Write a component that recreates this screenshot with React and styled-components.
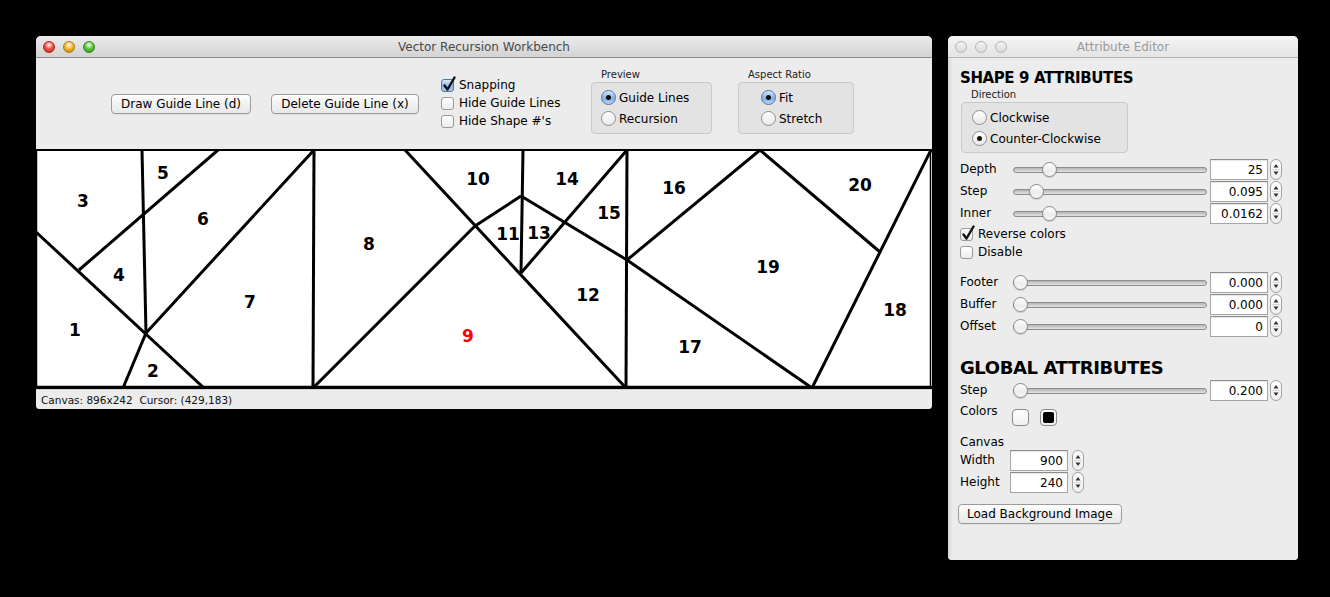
import React from "react";
import styled, { createGlobalStyle, css } from "styled-components";

const GlobalStyle = createGlobalStyle`
  html, body {
    margin: 0;
    padding: 0;
    background: #000;
  }
  body {
    font-family: "DejaVu Sans", "Liberation Sans", sans-serif;
    font-size: 12px;
    color: #000;
  }
`;

const Desktop = styled.div`
  display: flex;
  align-items: flex-start;
  gap: 16px;
  padding: 36px 0 0 36px;
  width: 1330px;
  height: 597px;
  box-sizing: border-box;
  background: #000;
`;

const Window = styled.div`
  width: ${p => p.$w}px;
  height: ${p => p.$h}px;
  background: #ececec;
  border-radius: 5px 5px 4px 4px;
  overflow: hidden;
  display: flex;
  flex-direction: column;
  box-sizing: border-box;
`;

const TitleBar = styled.div`
  height: 22px;
  flex: none;
  position: relative;
  display: flex;
  align-items: center;
  justify-content: center;
  box-sizing: border-box;
  padding-top: 1px;
  border-bottom: 1px solid ${p => (p.$active ? "#8e8e8e" : "#b5b5b5")};
  background: ${p =>
    p.$active
      ? "linear-gradient(#ebebeb, #d3d3d3)"
      : "linear-gradient(#f4f4f4, #e4e4e4)"};
  color: ${p => (p.$active ? "#4a4a4a" : "#9a9a9a")};
  font-size: 12px;
`;

const Lights = styled.div`
  position: absolute;
  left: 7px;
  top: 5px;
  display: flex;
  gap: 8px;
`;

const Light = styled.span`
  width: 12px;
  height: 12px;
  border-radius: 50%;
  box-sizing: border-box;
  ${p =>
    p.$hollow
      ? css`
          border: 1px solid #b4b4b4;
          background: linear-gradient(#f2f2f2, #dcdcdc);
        `
      : css`
          border: 1px solid ${p.$edge};
          background: radial-gradient(circle at 50% 30%, #fff 0, ${p.$c} 45%, ${p.$edge} 100%);
        `}
`;

const Toolbar = styled.div`
  height: 91px;
  flex: none;
  display: flex;
  align-items: flex-start;
  padding-left: 75px;
  box-sizing: border-box;
  background: #ececec;
`;

const PushButton = styled.button`
  flex: none;
  height: 20px;
  width: ${p => (p.$w ? `${p.$w}px` : "auto")};
  margin-top: ${p => p.$top || 0}px;
  margin-left: ${p => p.$left || 0}px;
  padding: 0 8px;
  font-family: inherit;
  font-size: 12px;
  color: #000;
  border: 1px solid #9b9b9b;
  border-radius: 4px;
  background: linear-gradient(#ffffff, #f1f1f1 50%, #e9e9e9);
  box-shadow: 0 1px 0 rgba(0, 0, 0, 0.06);
  white-space: nowrap;
`;

const CheckList = styled.div`
  flex: none;
  width: ${p => p.$w}px;
  margin-top: ${p => p.$top || 0}px;
  margin-left: ${p => p.$left || 0}px;
  display: flex;
  flex-direction: column;
`;

const CheckRow = styled.label`
  height: 18px;
  display: flex;
  align-items: center;
  gap: 5px;
  white-space: nowrap;
`;

const Box = styled.span`
  position: relative;
  width: 13px;
  height: 13px;
  flex: none;
  box-sizing: border-box;
  border-radius: 3px;
  border: 1px solid ${p => (p.$blue ? "#5177a8" : "#9a9a9a")};
  background: ${p =>
    p.$blue
      ? "linear-gradient(#d8e8fb, #89b5ea 55%, #a9cdf6)"
      : "linear-gradient(#ffffff, #ececec)"};
  svg {
    position: absolute;
    left: 0px;
    top: -4px;
  }
`;

const Tick = () => (
  <svg width="15" height="16" viewBox="0 0 15 16">
    <path d="M2.5 9.5 L5.5 13.5 L12.5 1.5" fill="none" stroke="#111" strokeWidth="2.4" strokeLinecap="round" strokeLinejoin="round" />
  </svg>
);

const Check = ({ on, blue, children }) => (
  <CheckRow>
    <Box $blue={blue}>{on && <Tick />}</Box>
    <span>{children}</span>
  </CheckRow>
);

const Group = styled.div`
  flex: none;
  width: ${p => p.$w}px;
  margin-top: ${p => p.$top || 0}px;
  margin-left: ${p => p.$left || 0}px;
  display: flex;
  flex-direction: column;
`;

const GroupLabel = styled.div`
  font-size: 10px;
  line-height: 13px;
  height: 13px;
  padding-left: ${p => p.$indent || 10}px;
  color: #222;
  margin-bottom: 1px;
`;

const GroupBox = styled.div`
  box-sizing: border-box;
  height: ${p => p.$h}px;
  padding: 4px 0 0 ${p => p.$pad}px;
  border: 1px solid #c9c9c9;
  border-radius: 4px;
  background: #e3e3e3;
`;

const RadioRow = styled.label`
  height: 21px;
  display: flex;
  align-items: center;
  gap: 3px;
  white-space: nowrap;
`;

const RadioDot = styled.span`
  width: 15px;
  height: 15px;
  flex: none;
  box-sizing: border-box;
  border-radius: 50%;
  display: flex;
  align-items: center;
  justify-content: center;
  border: 1px solid ${p => (p.$on && p.$blue ? "#4f74a6" : "#8f8f8f")};
  background: ${p =>
    p.$on && p.$blue
      ? "linear-gradient(#d6e7fb, #7fb0ea 55%, #b6d5f8)"
      : "linear-gradient(#ffffff, #e8e8e8)"};
  &::after {
    content: "";
    display: ${p => (p.$on ? "block" : "none")};
    width: 5px;
    height: 5px;
    border-radius: 50%;
    background: #111;
  }
`;

const Radio = ({ on, blue, children }) => (
  <RadioRow>
    <RadioDot $on={on} $blue={blue} />
    <span>{children}</span>
  </RadioRow>
);

const CanvasFrame = styled.div`
  height: 240px;
  flex: none;
  background: #fff;
  svg {
    display: block;
  }
`;

const StatusBar = styled.div`
  height: 20px;
  flex: none;
  display: flex;
  align-items: center;
  padding-left: 5px;
  font-size: 10.5px;
  color: #111;
  background: #ececec;
  border-top: 1px solid #d0d0d0;
  box-sizing: border-box;
  white-space: pre;
`;

const P = {
  A: [106, 1], B: [110, 184], C: [0, 83], D: [168, 239], E: [87, 239],
  F: [182, 1], G: [43, 121], H: [278, 1], I: [277, 239], J: [369, 1],
  K: [439, 77], L: [485, 47], M: [487, 1], N: [485, 124], O: [590, 239],
  Pp: [591, 1], Q: [591, 111], S: [724, 1], T: [844, 103], U: [895, 1],
  V: [776, 239],
};

const segments = [
  ["A", "B"], ["C", "D"], ["B", "E"], ["F", "G"], ["B", "H"], ["H", "I"],
  ["I", "K"], ["K", "L"], ["J", "O"], ["M", "N"], ["L", "Q"], ["N", "Pp"],
  ["Pp", "O"], ["Q", "S"], ["S", "T"], ["U", "V"], ["Q", "V"],
];

const labels = [
  [1, 39, 181], [2, 117, 222], [3, 47, 52], [4, 83, 126], [5, 127, 24],
  [6, 167, 70], [7, 214, 153], [8, 333, 95], [9, 432, 187], [10, 442, 30],
  [11, 472, 85], [12, 552, 146], [13, 503, 84], [14, 531, 30], [15, 573, 64],
  [16, 638, 39], [17, 654, 198], [18, 859, 161], [19, 732, 118], [20, 824, 36],
];

const Drawing = () => (
  <svg width="896" height="240" viewBox="0 0 896 240">
    <rect x="0" y="0" width="896" height="240" fill="#fff" />
    {segments.map(([a, b]) => (
      <line key={a + b} x1={P[a][0]} y1={P[a][1]} x2={P[b][0]} y2={P[b][1]} stroke="#000" strokeWidth="3" />
    ))}
    <rect x="0.5" y="0.5" width="894" height="237" fill="none" stroke="#000" strokeWidth="1.5" />
    <line x1="0" y1="1" x2="896" y2="1" stroke="#000" strokeWidth="2" />
    <line x1="0" y1="238.5" x2="896" y2="238.5" stroke="#000" strokeWidth="3" />
    {labels.map(([n, x, y]) => (
      <text
        key={n}
        x={x}
        y={y + 6}
        textAnchor="middle"
        fontFamily="DejaVu Sans, sans-serif"
        fontWeight="bold"
        fontSize="17"
        fill={n === 9 ? "#ff0000" : "#000"}
      >
        {n}
      </text>
    ))}
  </svg>
);

/* attribute editor */

const Panel = styled.div`
  flex: 1;
  padding: 10px 12px 0 12px;
  display: flex;
  flex-direction: column;
  background: linear-gradient(90deg, #d9d9d9 0, #ececec 5px);
`;

const Heading = styled.div`
  font-weight: bold;
  font-size: ${p => p.$size}px;
  line-height: ${p => p.$lh}px;
  margin-top: ${p => p.$top || 0}px;
  letter-spacing: -0.4px;
  white-space: nowrap;
`;

const SmallLabel = styled.div`
  font-size: 10px;
  line-height: 13px;
  margin-top: 1px;
  padding-left: 11px;
  color: #222;
`;

const FieldRow = styled.div`
  height: 22px;
  flex: none;
  display: grid;
  grid-template-columns: ${p => p.$label}px ${p => (p.$track ? "194px 3px" : "")} 58px 12px;
  column-gap: ${p => (p.$track ? 0 : 2)}px;
  align-items: start;
  margin-top: ${p => p.$top || 0}px;
`;

const RowLabel = styled.span`
  line-height: 20px;
  white-space: nowrap;
`;

const Track = styled.div`
  position: relative;
  height: 21px;
  &::before {
    content: "";
    position: absolute;
    left: 0;
    right: 0;
    top: 8px;
    height: 4px;
    border-radius: 3px;
    border: 1px solid #8c8c8c;
    background: linear-gradient(#b5b5b5, #e3e3e3);
  }
`;

const Knob = styled.span`
  position: absolute;
  top: 3px;
  width: 15px;
  height: 15px;
  box-sizing: border-box;
  border-radius: 50%;
  border: 1px solid #8a8a8a;
  background: linear-gradient(#ffffff, #ececec 60%, #f8f8f8);
  box-shadow: 0 1px 1px rgba(0, 0, 0, 0.15);
`;

const NumField = styled.div`
  height: 21px;
  box-sizing: border-box;
  border: 1px solid #a6a6a6;
  border-top-color: #8d8d8d;
  background: #fff;
  text-align: right;
  padding-right: 4px;
  line-height: 20px;
  font-size: 12px;
  box-shadow: inset 0 1px 1px rgba(0, 0, 0, 0.1);
`;

const StepperBox = styled.div`
  margin-left: 2px;
  width: 12px;
  height: 21px;
  box-sizing: border-box;
  border: 1px solid #a3a3a3;
  border-radius: 6px;
  background: linear-gradient(#ffffff, #eeeeee);
  svg {
    display: block;
  }
`;

const Stepper = () => (
  <StepperBox>
    <svg width="10" height="19" viewBox="0 0 10 19">
      <path d="M5 4 L7.5 7.5 L2.5 7.5 Z" fill="#333" />
      <path d="M5 15 L7.5 11.5 L2.5 11.5 Z" fill="#333" />
      <line x1="1" y1="9.5" x2="9" y2="9.5" stroke="#d8d8d8" strokeWidth="1" />
    </svg>
  </StepperBox>
);

const SliderRow = ({ label, value, pos, top }) => (
  <FieldRow $label={53} $track $top={top}>
    <RowLabel>{label}</RowLabel>
    <Track>
      <Knob style={{ left: `${pos * 179}px` }} />
    </Track>
    <span />
    <NumField>{value}</NumField>
    <Stepper />
  </FieldRow>
);

const SizeRow = ({ label, value }) => (
  <FieldRow $label={48}>
    <RowLabel>{label}</RowLabel>
    <NumField>{value}</NumField>
    <Stepper />
  </FieldRow>
);

const CheckStack = styled.div`
  display: flex;
  flex-direction: column;
  margin-top: ${p => p.$top || 0}px;
`;

const DirectionWrap = styled.div`
  width: 167px;
  margin: 1px 0 0 1px;
`;

const ColorsRow = styled.div`
  height: 25px;
  display: flex;
  align-items: flex-start;
  span:first-child {
    width: 52px;
    line-height: 18px;
  }
`;

const Swatch = styled.span`
  width: 17px;
  height: 17px;
  margin-top: 7px;
  margin-right: 11px;
  box-sizing: border-box;
  border: 1px solid #8a8a8a;
  border-radius: 4px;
  background: linear-gradient(#ffffff, #efefef);
  display: flex;
  align-items: center;
  justify-content: center;
  &::after {
    content: "";
    display: ${p => (p.$fill ? "block" : "none")};
    width: 11px;
    height: 11px;
    border-radius: 2px;
    background: ${p => p.$fill};
  }
`;

const PlainLabel = styled.div`
  line-height: 16px;
  margin-top: ${p => p.$top || 0}px;
`;

const ButtonLine = styled.div`
  margin-left: -2px;
`;

export default function App() {
  return (
    <>
      <GlobalStyle />
      <Desktop>
        <Window $w={896} $h={373}>
          <TitleBar $active>
            <Lights>
              <Light $c="#f4524c" $edge="#b02420" />
              <Light $c="#f6b62a" $edge="#b07a12" />
              <Light $c="#5fc63d" $edge="#2e8a1d" />
            </Lights>
            Vector Recursion Workbench
          </TitleBar>
          <Toolbar>
            <PushButton $w={140} $top={36}>Draw Guide Line (d)</PushButton>
            <PushButton $w={148} $top={36} $left={20}>Delete Guide Line (x)</PushButton>
            <CheckList $w={150} $top={18} $left={22}>
              <Check on blue>Snapping</Check>
              <Check>Hide Guide Lines</Check>
              <Check>Hide Shape #'s</Check>
            </CheckList>
            <Group $w={121} $top={10}>
              <GroupLabel>Preview</GroupLabel>
              <GroupBox $h={52} $pad={9}>
                <Radio on blue>Guide Lines</Radio>
                <Radio>Recursion</Radio>
              </GroupBox>
            </Group>
            <Group $w={116} $top={10} $left={26}>
              <GroupLabel>Aspect Ratio</GroupLabel>
              <GroupBox $h={52} $pad={22}>
                <Radio on blue>Fit</Radio>
                <Radio>Stretch</Radio>
              </GroupBox>
            </Group>
          </Toolbar>
          <CanvasFrame>
            <Drawing />
          </CanvasFrame>
          <StatusBar>Canvas: 896x242  Cursor: (429,183)</StatusBar>
        </Window>

        <Window $w={350} $h={524}>
          <TitleBar>
            <Lights>
              <Light $hollow />
              <Light $hollow />
              <Light $hollow />
            </Lights>
            Attribute Editor
          </TitleBar>
          <Panel>
            <Heading $size={15} $lh={18} $top={1}>SHAPE 9 ATTRIBUTES</Heading>
            <SmallLabel>Direction</SmallLabel>
            <DirectionWrap>
              <GroupBox $h={51} $pad={10}>
                <Radio>Clockwise</Radio>
                <Radio on>Counter-Clockwise</Radio>
              </GroupBox>
            </DirectionWrap>
            <SliderRow label="Depth" value="25" pos={0.16} top={6} />
            <SliderRow label="Step" value="0.095" pos={0.092} />
            <SliderRow label="Inner" value="0.0162" pos={0.16} />
            <CheckStack>
              <Check on>Reverse colors</Check>
              <Check>Disable</Check>
            </CheckStack>
            <SliderRow label="Footer" value="0.000" pos={0} top={11} />
            <SliderRow label="Buffer" value="0.000" pos={0} />
            <SliderRow label="Offset" value="0" pos={0} />
            <Heading $size={18} $lh={22} $top={19}>GLOBAL ATTRIBUTES</Heading>
            <SliderRow label="Step" value="0.200" pos={0} top={1} />
            <ColorsRow>
              <span>Colors</span>
              <Swatch />
              <Swatch $fill="#000" />
            </ColorsRow>
            <PlainLabel $top={7}>Canvas</PlainLabel>
            <SizeRow label="Width" value="900" />
            <SizeRow label="Height" value="240" />
            <ButtonLine>
              <PushButton $top={10}>Load Background Image</PushButton>
            </ButtonLine>
          </Panel>
        </Window>
      </Desktop>
    </>
  );
}
